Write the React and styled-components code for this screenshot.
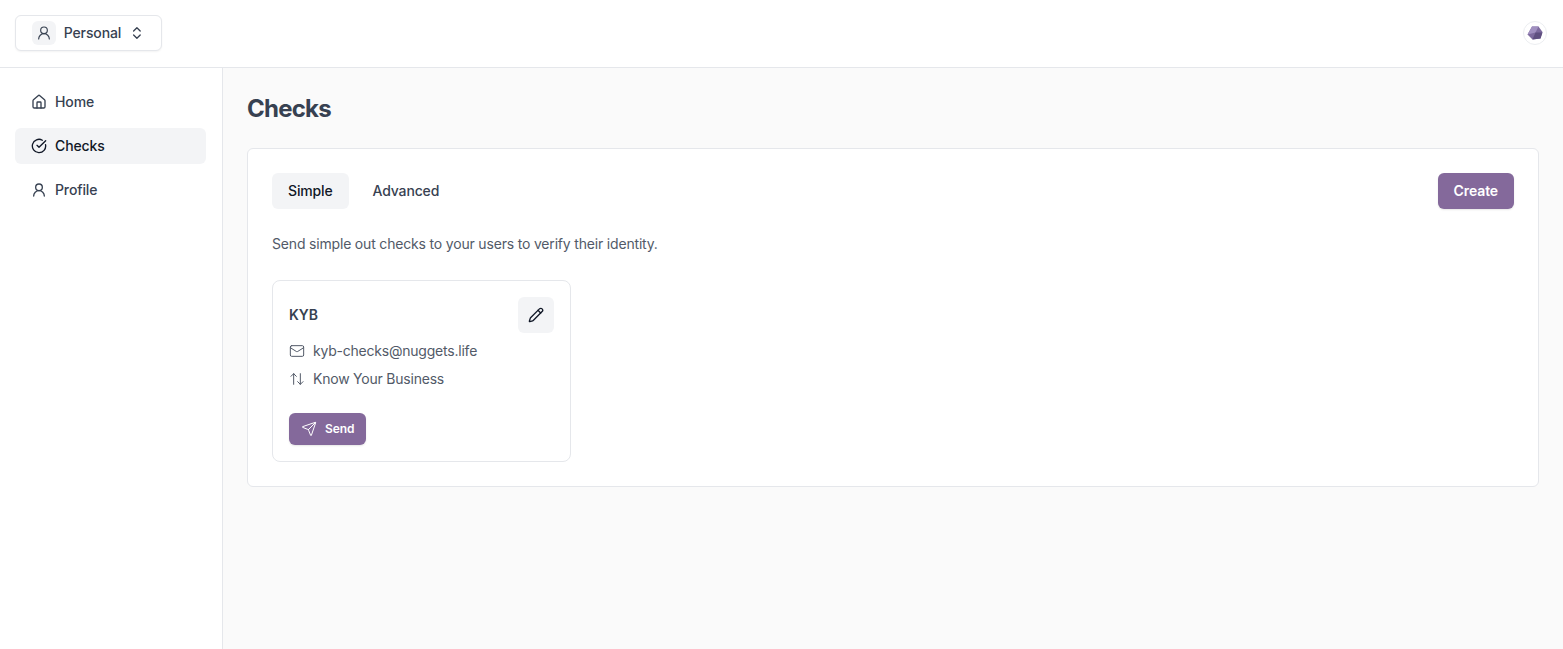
import styled, { createGlobalStyle } from "styled-components";
import {
  ArrowUpDown,
  ChevronsUpDown,
  CircleCheckBig,
  House,
  Mail,
  Pencil,
  Send,
  UserRound,
} from "lucide-react";

const GlobalStyle = createGlobalStyle`
  html, body {
    margin: 0;
    padding: 0;
    height: 100%;
    background: #fff;
  }
  body {
    font-family: Inter, "Liberation Sans", sans-serif;
    color: #374151;
  }
  * {
    box-sizing: border-box;
  }
`;

const Page = styled.div`
  width: 100%;
  height: 649px;
  display: flex;
  flex-direction: column;
  overflow: hidden;
`;

const TopBar = styled.header`
  height: 68px;
  flex: none;
  display: flex;
  align-items: center;
  justify-content: space-between;
  padding: 0 16px 1px 15px;
  border-bottom: 1px solid #e5e7eb;
  background: #fff;
`;

const AccountButton = styled.button`
  width: 147px;
  height: 36px;
  display: flex;
  align-items: center;
  gap: 8px;
  padding: 0 16px;
  margin-top: -1px;
  background: #fff;
  border: 1px solid #e5e7eb;
  border-radius: 6px;
  box-shadow: 0 1px 2px rgba(0, 0, 0, 0.05);
  font: 500 14px/20px Inter, sans-serif;
  letter-spacing: -0.12px;
  color: #374151;
`;

const AccountIcon = styled.span`
  width: 24px;
  height: 24px;
  display: flex;
  align-items: center;
  justify-content: center;
  background: #f3f4f6;
  border-radius: 6px;
  color: #374151;
`;

const Avatar = styled.div`
  width: 24px;
  height: 24px;
  margin-top: -1px;
  display: flex;
  align-items: center;
  justify-content: center;
  border: 1px solid #eceef1;
  border-radius: 50%;
  background: #fff;
`;

const Body = styled.div`
  flex: 1;
  display: flex;
  min-height: 0;
`;

const Sidebar = styled.nav`
  width: 223px;
  flex: none;
  display: flex;
  flex-direction: column;
  gap: 8px;
  padding: 16px 16px 0 15px;
  border-right: 1px solid #e5e7eb;
  background: #fff;
`;

const NavItem = styled.a`
  height: 36px;
  display: flex;
  align-items: center;
  gap: 8px;
  padding: 0 16px;
  border-radius: 6px;
  font-size: 14px;
  font-weight: 500;
  line-height: 20px;
  letter-spacing: -0.12px;
  color: ${(p) => (p.$active ? "#111827" : "#374151")};
  background: ${(p) => (p.$active ? "#f3f4f6" : "transparent")};
`;

const Main = styled.main`
  flex: 1;
  min-width: 0;
  padding: 24px;
  background: #fafafa;
`;

const Title = styled.h1`
  margin: 1px 0 23px;
  height: 32px;
  font-size: 24px;
  font-weight: 700;
  line-height: 32px;
  letter-spacing: -0.75px;
  color: #374151;
`;

const Panel = styled.section`
  padding: 24px;
  background: #fff;
  border: 1px solid #e5e7eb;
  border-radius: 6px;
`;

const PanelHead = styled.div`
  display: flex;
  align-items: center;
  justify-content: space-between;
  height: 36px;
  margin-bottom: 25px;
`;

const Tabs = styled.div`
  display: flex;
  gap: 8px;
`;

const Tab = styled.button`
  height: 36px;
  padding: 0 16px;
  border: 0;
  border-radius: 6px;
  font: 500 14px/20px Inter, sans-serif;
  letter-spacing: -0.15px;
  color: ${(p) => (p.$active ? "#111827" : "#374151")};
  background: ${(p) => (p.$active ? "#f3f4f6" : "transparent")};
`;

const PrimaryButton = styled.button`
  display: flex;
  align-items: center;
  justify-content: center;
  gap: 8px;
  height: ${(p) => (p.$small ? "32px" : "36px")};
  padding: 0 ${(p) => (p.$small ? "12px" : "16px")};
  border: 0;
  border-radius: 6px;
  background: #84699b;
  color: #fff;
  font: 600 ${(p) => (p.$small ? "12px/16px" : "14px/20px")} Inter, sans-serif;
  letter-spacing: -0.12px;
  box-shadow: 0 1px 2px rgba(0, 0, 0, 0.1);
`;

const Intro = styled.p`
  margin: 0 0 26px;
  font-size: 14px;
  line-height: 20px;
  letter-spacing: -0.18px;
  color: #525a68;
`;

const Card = styled.article`
  width: 299px;
  height: 182px;
  padding: 16px;
  border: 1px solid #e5e7eb;
  border-radius: 8px;
  background: #fff;
`;

const CardHead = styled.div`
  display: flex;
  align-items: center;
  justify-content: space-between;
  height: 36px;
  margin-bottom: 4px;
`;

const CardName = styled.h3`
  margin: 0;
  font-size: 14px;
  font-weight: 600;
  line-height: 20px;
  color: #374151;
`;

const IconButton = styled.button`
  width: 36px;
  height: 36px;
  display: flex;
  align-items: center;
  justify-content: center;
  padding: 0;
  border: 0;
  border-radius: 6px;
  background: #f3f4f6;
  color: #111827;
`;

const Detail = styled.div`
  height: 28px;
  display: flex;
  align-items: center;
  gap: 8px;
  font-size: 14px;
  line-height: 20px;
  letter-spacing: -0.22px;
  color: #525a68;
`;

const CardActions = styled.div`
  margin-top: 20px;
  display: flex;
`;

function App() {
  return (
    <Page>
      <GlobalStyle />
      <TopBar>
        <AccountButton>
          <AccountIcon>
            <UserRound size={16} strokeWidth={1.75} />
          </AccountIcon>
          Personal
          <ChevronsUpDown size={16} strokeWidth={2} />
        </AccountButton>
        <Avatar>
          <svg width="18" height="18" viewBox="0 0 18 18">
            <path d="M6 2.5h6.5L16.5 8l-2 6.5-8 1L1.5 10.5z" fill="#7d6a9e" />
            <path d="M6 2.5h6.5L9.5 8.5l-8 2z" fill="#a08fc0" />
            <path d="M9.5 8.5h7l-2 6-8 1z" fill="#5f4f80" />
          </svg>
        </Avatar>
      </TopBar>
      <Body>
        <Sidebar>
          <NavItem>
            <House size={16} strokeWidth={2} />
            Home
          </NavItem>
          <NavItem $active>
            <CircleCheckBig size={16} strokeWidth={2} />
            Checks
          </NavItem>
          <NavItem>
            <UserRound size={16} strokeWidth={2} />
            Profile
          </NavItem>
        </Sidebar>
        <Main>
          <Title>Checks</Title>
          <Panel>
            <PanelHead>
              <Tabs>
                <Tab $active>Simple</Tab>
                <Tab>Advanced</Tab>
              </Tabs>
              <PrimaryButton>Create</PrimaryButton>
            </PanelHead>
            <Intro>Send simple out checks to your users to verify their identity.</Intro>
            <Card>
              <CardHead>
                <CardName>KYB</CardName>
                <IconButton>
                  <Pencil size={16} strokeWidth={2} />
                </IconButton>
              </CardHead>
              <Detail>
                <Mail size={16} strokeWidth={1.5} />
                kyb-checks@nuggets.life
              </Detail>
              <Detail>
                <ArrowUpDown size={16} strokeWidth={1.5} />
                Know Your Business
              </Detail>
              <CardActions>
                <PrimaryButton $small>
                  <Send size={16} strokeWidth={1.5} />
                  Send
                </PrimaryButton>
              </CardActions>
            </Card>
          </Panel>
        </Main>
      </Body>
    </Page>
  );
}

export default App;
